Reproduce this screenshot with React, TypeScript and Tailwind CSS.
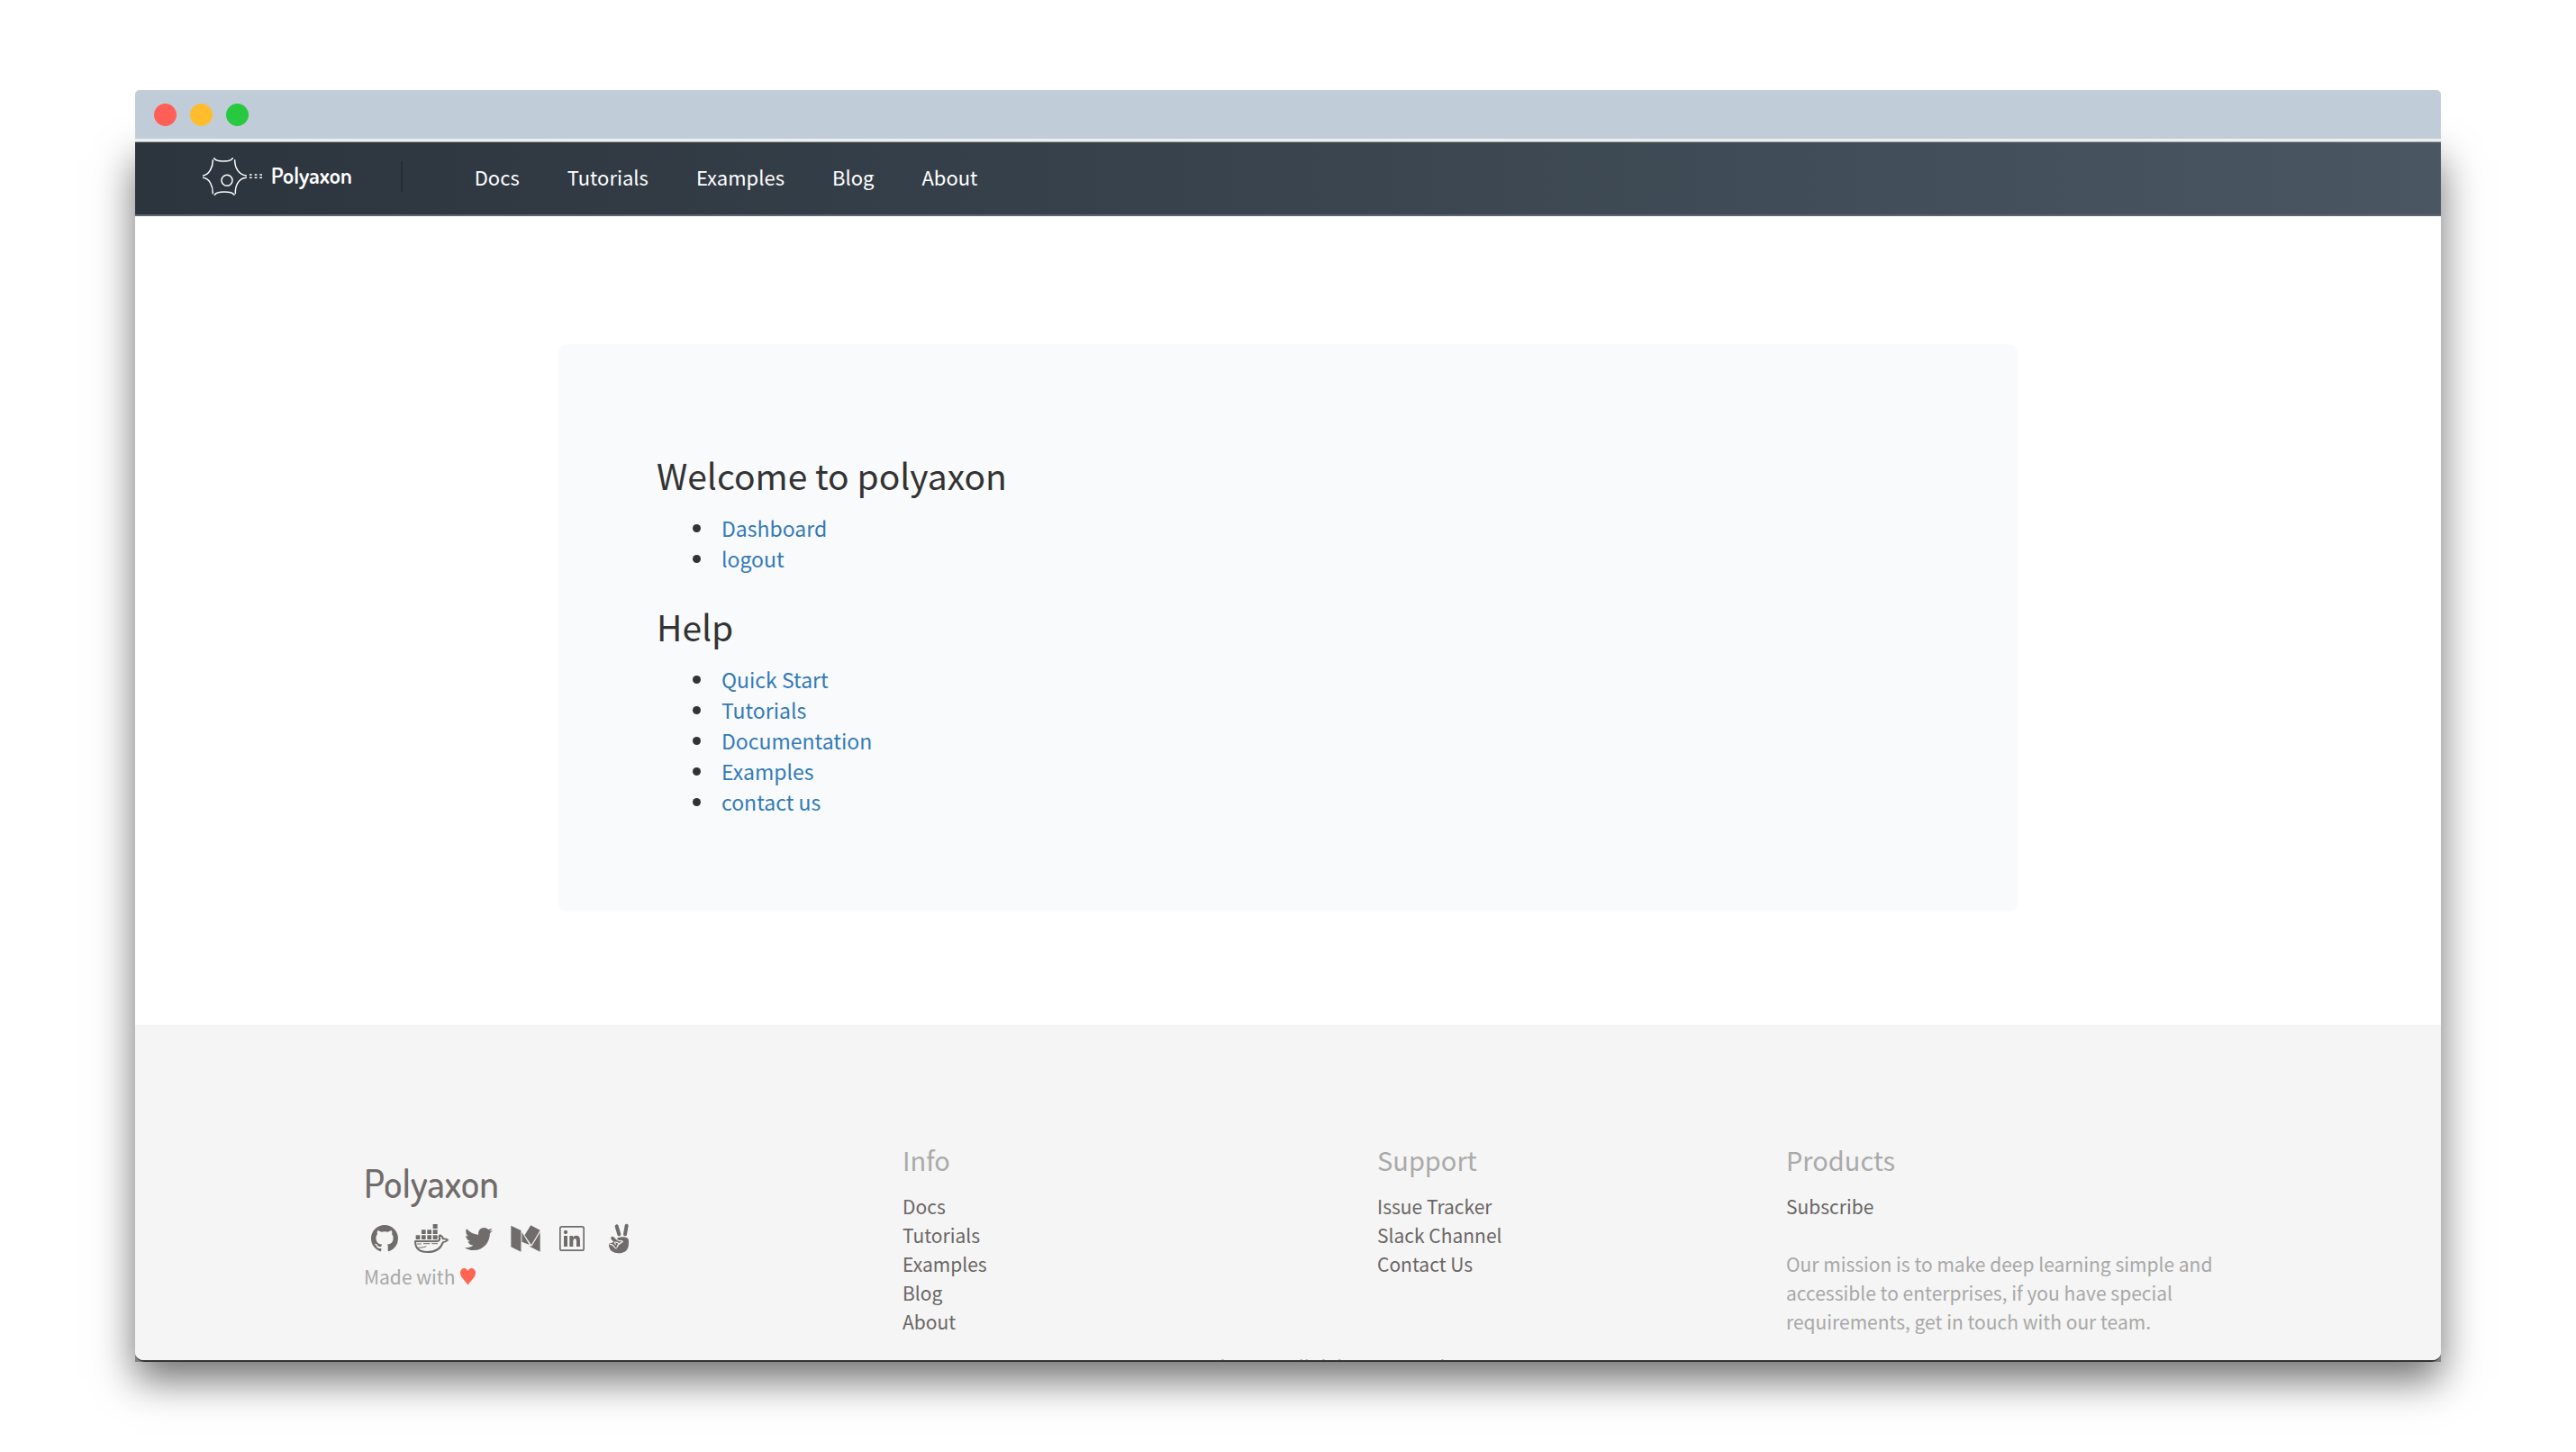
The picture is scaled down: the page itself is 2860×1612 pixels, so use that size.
import type { ReactNode } from 'react';
import { FaTwitter } from 'react-icons/fa';
import { BsGithub } from 'react-icons/bs';

const NAV = ['Docs', 'Tutorials', 'Examples', 'Blog', 'About'];
const START = ['Dashboard', 'logout'];
const HELP = ['Quick Start', 'Tutorials', 'Documentation', 'Examples', 'contact us'];
const SUPPORT = ['Issue Tracker', 'Slack Channel', 'Contact Us'];

function NeuronLogo() {
  return (
    <svg className="h-[48px] w-[72px]" viewBox="282 276 216 144" fill="none" stroke="#fff" strokeWidth="4.5" strokeLinecap="round" aria-hidden="true">
      <path d="M323 287Q328 297 354 297T385 287" />
      <path d="M319 293C319 316 308 341 287 345" />
      <path d="M392 293C392 318 405 343 430 345" />
      <path d="M287 352C308 355 319 379 319 404" />
      <path d="M325 409Q330 399 357 399T390 409" />
      <path d="M394 404C393 379 404 354 430 352" />
      <circle cx="366" cy="361" r="18" />
      <path d="M441 342h8M458 342h8M475 342h8M441 352h8M458 352h8M475 352h8" strokeLinecap="butt" strokeWidth="4.5" />
    </svg>
  );
}

function DockerIcon() {
  return (
    <svg className="h-[34px] w-[40px]" viewBox="237 294 120 102" aria-hidden="true">
      <g fill="currentColor">
        <path d="M302 297h15v15h-15zM264 316h14v14h-14zM283 316h14v14h-14zM302 316h15v14h-15zM245 334h14v14h-14zM264 334h14v14h-14zM283 334h14v14h-14zM302 334h15v14h-15z" />
      </g>
      <path d="M243 354H317Q326 352 324 343Q321 337 326 334Q335 338 335 346Q344 345 351 350Q344 357 335 358C328 379 309 390 284 390C256 390 243 376 243 354Z" fill="none" stroke="currentColor" strokeWidth="6" strokeLinejoin="round" />
      <path d="M248 363H264M270 362H292M298 362H318M253 375Q268 377 280 371" fill="none" stroke="currentColor" strokeWidth="3" />
    </svg>
  );
}

function MediumIcon() {
  return (
    <svg className="h-[30px] w-[33px]" viewBox="560 297 98 89" fill="currentColor" aria-hidden="true">
      <path d="M561 299L594 315V385L561 369Z" />
      <path d="M626 298L657 314L628 362L606 330Z" />
      <path d="M597 321L622 362L597 353Z" />
      <path d="M657 321V385L621 367L630 366Z" />
    </svg>
  );
}

function LinkedInIcon() {
  return (
    <svg className="h-[28px] w-[28px]" viewBox="732 300 84 84" fill="currentColor" aria-hidden="true">
      <rect x="734.5" y="302.5" width="79" height="79" rx="6" fill="none" stroke="currentColor" strokeWidth="5" />
      <circle cx="753" cy="321" r="6.5" />
      <path d="M747 333h12v36h-12z" />
      <path d="M766 333h11v5q4-6 11-6 13 0 13 16v21h-12v-19q0-8-5-8-6 0-6 8v19h-12z" />
    </svg>
  );
}

function AngelListIcon() {
  return (
    <svg className="h-[34px] w-[24px]" viewBox="879 286 72 102" aria-hidden="true">
      <g fill="none" stroke="currentColor" strokeLinecap="round">
        <path d="M908 296L916 323" strokeWidth="12" />
        <path d="M941 294L936 323" strokeWidth="12" />
        <path d="M894 336L903 345" strokeWidth="11" />
      </g>
      <path d="M912 335Q930 329 943 335Q949 339 948 352Q948 386 914 386Q886 386 882 362Q881 350 892 352Q896 344 906 350Q902 340 912 335Z" fill="currentColor" />
      <path d="M886 356Q896 357 899 363T907 370M904 356Q896 346 909 350L917 355Q911 358 909 366M907 338Q909 344 922 345Q932 346 925 350Q914 353 912 361" fill="none" stroke="#f5f5f5" strokeWidth="3.5" strokeLinecap="round" />
    </svg>
  );
}

const SOCIAL: { name: string; icon: ReactNode }[] = [
  { name: 'GitHub', icon: <BsGithub size={30} /> },
  { name: 'Docker', icon: <DockerIcon /> },
  { name: 'Twitter', icon: <FaTwitter size={31} /> },
  { name: 'Medium', icon: <MediumIcon /> },
  { name: 'LinkedIn', icon: <LinkedInIcon /> },
  { name: 'AngelList', icon: <AngelListIcon /> },
];

function BulletLinks({ items }: { items: string[] }) {
  return (
    <ul className="pl-10 text-[23px] leading-[34px] text-[#337ab7]">
      {items.map((item) => (
        <li key={item} className="flex items-center gap-[23px]">
          <span className="size-[9px] rounded-full bg-[#333]" />
          <a href="#">{item}</a>
        </li>
      ))}
    </ul>
  );
}

function FooterColumn({ title, links, children }: { title: string; links: string[]; children?: ReactNode }) {
  return (
    <div>
      <h3 className="mb-4 text-[29px] leading-10 text-[#aaa]">{title}</h3>
      <ul className="text-[#6a6665]">
        {links.map((link) => (
          <li key={link}>
            <a href="#">{link}</a>
          </li>
        ))}
      </ul>
      {children}
    </div>
  );
}

export default function App() {
  return (
    <div className="flex h-screen flex-col bg-white px-[150px] py-[100px] font-['Noto_Sans_CJK_SC','Noto_Sans',sans-serif] text-[#333]">
      <div className="relative z-10 shrink-0">
        <div className="flex h-[54px] items-center gap-[15px] rounded-t-[5px] bg-[#c0cdd8] pl-[21px]">
          <button aria-label="Close" className="size-[25px] rounded-full bg-[#ff5f57]" />
          <button aria-label="Minimize" className="size-[25px] rounded-full bg-[#ffbd2e]" />
          <button aria-label="Zoom" className="size-[25px] rounded-full bg-[#28c940]" />
        </div>
        <div className="h-1 border-b border-[#a9abad] bg-[#eee]" />
      </div>

      <div className="flex min-h-0 flex-1 flex-col bg-[#85837d] shadow-[0_20px_42px_rgba(0,0,0,0.56)]">
        <div className="flex min-h-0 flex-1 flex-col overflow-hidden rounded-b-[10px] border-b-2 border-[#333] bg-white">
          <header className="flex h-[82px] shrink-0 items-center border-b-2 border-[#5c6570] bg-linear-to-r from-[#2c343d] via-[#39444e] to-[#4a5763] pb-1 pl-[74px] text-white">
            <a href="#" className="flex items-center gap-[5px]">
              <NeuronLogo />
              <span className="pb-1 font-['Dosis','Noto_Sans_CJK_SC',sans-serif] text-[25px] leading-8 font-semibold">Polyaxon</span>
            </a>
            <div className="ml-[54px] h-[34px] w-0.5 bg-[#262d36]" />
            <nav className="ml-[80px] flex gap-[53px] text-[22px] leading-8">
              {NAV.map((item) => (
                <a key={item} href="#">
                  {item}
                </a>
              ))}
            </nav>
          </header>

          <main className="shrink-0 px-10 pt-[142px] pb-[126px]">
            <section className="mx-auto max-w-[1620px] rounded-[10px] bg-[#f9fafc] px-[109px] pt-[119px] pb-[105px]">
              <h1 className="mb-4 text-[39px] leading-[52px]">Welcome to polyaxon</h1>
              <BulletLinks items={START} />
              <h2 className="mt-8 mb-4 text-[39px] leading-[52px]">Help</h2>
              <BulletLinks items={HELP} />
            </section>
          </main>

          <footer className="flex-1 bg-[#f5f5f5] px-[250px] pt-[129px] text-[21px] leading-8 text-[#a8a8a8]">
            <div className="grid grid-cols-[602fr_527fr_454fr_477fr]">
              <div className="pt-5 pl-1">
                <p className="font-['Dosis','Noto_Sans_CJK_SC',sans-serif] text-[43px] leading-[52px] font-medium text-[#706c6b]">Polyaxon</p>
                <ul className="mt-[18px] mb-2 -ml-[3px] flex h-9 text-[#706c6b]">
                  {SOCIAL.map(({ name, icon }) => (
                    <li key={name} className="flex w-[52px]">
                      <a href="#" aria-label={name} className="flex flex-1 items-center justify-center">
                        {icon}
                      </a>
                    </li>
                  ))}
                </ul>
                <p className="flex items-center gap-[5px]">
                  Made with
                  <svg className="h-[19px] w-[17px]" viewBox="0 0 17 19" aria-label="love">
                    <path d="M8.500 19C7.500 15 0 11 0 5C0 2 2 0 4.500 0C6.500 0 8 1.500 8.500 3C9 1.500 10.500 0 12.500 0C15 0 17 2 17 5C17 11 9.500 15 8.500 19Z" fill="#ff6550" />
                  </svg>
                </p>
              </div>
              <FooterColumn title="Info" links={NAV} />
              <FooterColumn title="Support" links={SUPPORT} />
              <FooterColumn title="Products" links={['Subscribe']}>
                <p className="mt-8">Our mission is to make deep learning simple and accessible to enterprises, if you have special requirements, get in touch with our team.</p>
              </FooterColumn>
            </div>
            <p className="mt-[18px] text-center">© 2018 Polyaxon. All rights reserved</p>
          </footer>
        </div>
      </div>
    </div>
  );
}
